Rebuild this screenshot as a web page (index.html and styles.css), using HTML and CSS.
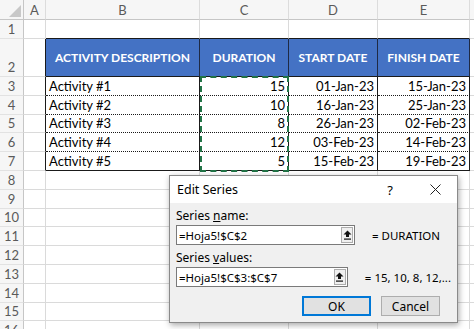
FILE: index.html
```html
<!DOCTYPE html>
<html lang="en">
<head>
  <meta charset="UTF-8">
  <meta name="viewport" content="width=device-width, initial-scale=1.0">
  <title>Edit Series</title>
  <link rel="stylesheet" href="styles.css">
</head>
<body>
  <div class="sheet">
    <!-- column headers -->
    <div class="corner"><svg width="12" height="12" viewBox="0 0 12 12"><path d="M12 0 V12 H0 Z" fill="#c8c8c8"/></svg></div>
    <div class="col-head">A</div>
    <div class="col-head">B</div>
    <div class="col-head">C</div>
    <div class="col-head">D</div>
    <div class="col-head">E</div>
    <div class="col-head"></div>

    <!-- row 1 -->
    <div class="row-head">1</div>
    <div class="cell"></div>
    <div class="cell top-edge"></div>
    <div class="cell top-edge"></div>
    <div class="cell top-edge"></div>
    <div class="cell top-edge"></div>
    <div class="cell"></div>

    <!-- row 2 -->
    <div class="row-head">2</div>
    <div class="cell left-edge"></div>
    <div class="cell th">ACTIVITY DESCRIPTION</div>
    <div class="cell th">DURATION</div>
    <div class="cell th">START DATE</div>
    <div class="cell th">FINISH DATE</div>
    <div class="cell"></div>

    <!-- rows 3-7 -->
    <div class="row-head">3</div>
    <div class="cell left-edge"></div>
    <div class="cell td">Activity #1</div>
    <div class="cell td num">15</div>
    <div class="cell td num">01-Jan-23</div>
    <div class="cell td num">15-Jan-23</div>
    <div class="cell"></div>

    <div class="row-head">4</div>
    <div class="cell left-edge"></div>
    <div class="cell td">Activity #2</div>
    <div class="cell td num">10</div>
    <div class="cell td num">16-Jan-23</div>
    <div class="cell td num">25-Jan-23</div>
    <div class="cell"></div>

    <div class="row-head">5</div>
    <div class="cell left-edge"></div>
    <div class="cell td">Activity #3</div>
    <div class="cell td num">8</div>
    <div class="cell td num">26-Jan-23</div>
    <div class="cell td num">02-Feb-23</div>
    <div class="cell"></div>

    <div class="row-head">6</div>
    <div class="cell left-edge"></div>
    <div class="cell td">Activity #4</div>
    <div class="cell td num">12</div>
    <div class="cell td num">03-Feb-23</div>
    <div class="cell td num">14-Feb-23</div>
    <div class="cell"></div>

    <div class="row-head">7</div>
    <div class="cell left-edge"></div>
    <div class="cell td last">Activity #5</div>
    <div class="cell td last num">5</div>
    <div class="cell td last num">15-Feb-23</div>
    <div class="cell td last num">19-Feb-23</div>
    <div class="cell"></div>

    <!-- empty rows -->
    <div class="row-head">8</div>
    <div class="cell"></div><div class="cell"></div><div class="cell"></div><div class="cell"></div><div class="cell"></div><div class="cell"></div>
    <div class="row-head">9</div>
    <div class="cell"></div><div class="cell"></div><div class="cell"></div><div class="cell"></div><div class="cell"></div><div class="cell"></div>
    <div class="row-head">10</div>
    <div class="cell"></div><div class="cell"></div><div class="cell"></div><div class="cell"></div><div class="cell"></div><div class="cell"></div>
    <div class="row-head">11</div>
    <div class="cell"></div><div class="cell"></div><div class="cell"></div><div class="cell"></div><div class="cell"></div><div class="cell"></div>
    <div class="row-head">12</div>
    <div class="cell"></div><div class="cell"></div><div class="cell"></div><div class="cell"></div><div class="cell"></div><div class="cell"></div>
    <div class="row-head">13</div>
    <div class="cell"></div><div class="cell"></div><div class="cell"></div><div class="cell"></div><div class="cell"></div><div class="cell"></div>
    <div class="row-head">14</div>
    <div class="cell"></div><div class="cell"></div><div class="cell"></div><div class="cell"></div><div class="cell"></div><div class="cell"></div>
    <div class="row-head">15</div>
    <div class="cell"></div><div class="cell"></div><div class="cell"></div><div class="cell"></div><div class="cell"></div><div class="cell"></div>
    <div class="row-head">16</div>
    <div class="cell"></div><div class="cell"></div><div class="cell"></div><div class="cell"></div><div class="cell"></div><div class="cell"></div>

    <!-- copied range C3:C7 -->
    <div class="copy-range"></div>
  </div>

  <div class="dialog">
    <div class="dialog-title">
      <span class="dialog-name">Edit Series</span>
      <span class="title-btn">?</span>
      <span class="title-btn">
        <svg width="11" height="11" viewBox="0 0 11 11"><path d="M0.5 0.5 L10.5 10.5 M10.5 0.5 L0.5 10.5" stroke="#222" stroke-width="1"/></svg>
      </span>
    </div>
    <div class="dialog-body">
      <div class="field-label">Series <u>n</u>ame:</div>
      <div class="field-row">
        <div class="ref-input">
          <span class="ref-text">=Hoja5!$C$2</span>
          <span class="ref-btn"><svg width="9" height="10" viewBox="0 0 9 10"><path d="M4.5 0.5 L8.5 4.5 H6 V7 H3 V4.5 H0.5 Z" fill="#111"/><rect x="1" y="8.5" width="7" height="1.2" fill="#111"/></svg></span>
        </div>
        <span class="field-result">= DURATION</span>
      </div>
      <div class="field-label">Series <u>v</u>alues:</div>
      <div class="field-row">
        <div class="ref-input">
          <span class="ref-text">=Hoja5!$C$3:$C$7</span>
          <span class="ref-btn"><svg width="9" height="10" viewBox="0 0 9 10"><path d="M4.5 0.5 L8.5 4.5 H6 V7 H3 V4.5 H0.5 Z" fill="#111"/><rect x="1" y="8.5" width="7" height="1.2" fill="#111"/></svg></span>
        </div>
        <span class="field-result">= 15, 10, 8, 12,...</span>
      </div>
      <div class="dialog-actions">
        <button class="btn btn-ok">OK</button>
        <button class="btn btn-cancel">Cancel</button>
      </div>
    </div>
  </div>
</body>
</html>
```

FILE: styles.css
```css
:root {
  --grid-line: #dadada;
  --head-bg: #f6f6f6;
  --head-text: #5a5a5a;
  --table-blue: #4472c4;
  --copy-green: #217346;
  --cell-font: 'Lato', 'Liberation Sans', sans-serif;
  --ui-font: 'Noto Sans', 'Open Sans', sans-serif;
}

*, *::before, *::after {
  box-sizing: border-box;
}

body {
  margin: 0;
  background: #fff;
  overflow: hidden;
}

/* Hoja de cálculo */
.sheet {
  position: relative;
  display: grid;
  grid-template-columns: 24px 22px 154px 89px 89px 92px 1fr;
  grid-template-rows: 20px 19px 38px repeat(14, 18.8px);
  width: 474px;
  font-family: var(--cell-font);
  font-size: 13px;
  color: #000;
}

.corner {
  display: flex;
  align-items: flex-end;
  justify-content: flex-end;
  padding: 0 2px 2px 0;
  background: var(--head-bg);
  border-right: 1px solid #c6c6c6;
  border-bottom: 1px solid #c6c6c6;
}

.col-head {
  display: flex;
  align-items: center;
  justify-content: center;
  background: var(--head-bg);
  color: var(--head-text);
  border-right: 1px solid #dcdcdc;
  border-bottom: 1px solid #c6c6c6;
}

.row-head {
  display: flex;
  align-items: flex-end;
  justify-content: center;
  padding-bottom: 1px;
  background: var(--head-bg);
  color: var(--head-text);
  border-right: 1px solid #c6c6c6;
  border-bottom: 1px solid #e2e2e2;
}

.cell {
  display: flex;
  align-items: flex-end;
  padding: 0 3px 1px;
  white-space: nowrap;
  overflow: hidden;
  border-right: 1px solid var(--grid-line);
  border-bottom: 1px solid var(--grid-line);
}

.top-edge {
  border-bottom-color: #1a1a1a;
}

.left-edge {
  border-right-color: #1a1a1a;
}

.th {
  align-items: center;
  justify-content: center;
  padding: 0;
  background: var(--table-blue);
  color: #fff;
  font-weight: 700;
  font-size: 12px;
  border-right: 1px solid #1f2a44;
  border-bottom: 1px solid #1a1a1a;
}

.td {
  border-right: 1px solid #1a1a1a;
  border-bottom: 1px dotted #1a1a1a;
}

.td.last {
  border-bottom: 1px solid #1a1a1a;
}

.num {
  justify-content: flex-end;
}

/* rango copiado: capa sobre C3:C7 */
.copy-range {
  position: absolute;
  grid-column: 4 / 5;
  grid-row: 4 / 9;
  inset: -1px 0 -1px 0;
  border: 2px dashed var(--copy-green);
  z-index: 1;
}

/* Cuadro de diálogo */
.dialog {
  position: absolute;
  left: 169px;
  top: 175px;
  width: 289px;
  height: 148px;
  display: flex;
  flex-direction: column;
  border: 1px solid #8a8a8a;
  background: #f0f0f0;
  box-shadow: 1px 2px 6px rgba(0, 0, 0, 0.35);
  font-family: var(--ui-font);
  font-size: 12px;
  color: #000;
  z-index: 2;
}

.dialog-title {
  display: flex;
  align-items: center;
  height: 30px;
  padding: 0 7px;
  background: #fff;
}

.dialog-name {
  flex: 1;
  font-size: 12.5px;
}

.title-btn {
  display: flex;
  align-items: center;
  justify-content: center;
  width: 30px;
  margin-left: 15px;
  font-size: 13px;
}

.dialog-body {
  flex: 1;
  padding: 4px 6px 6px;
}

.field-label {
  line-height: 17px;
  margin-bottom: 1px;
}

.field-row {
  display: flex;
  align-items: center;
  gap: 17px;
  margin-bottom: 4px;
}

.ref-input {
  display: flex;
  align-items: center;
  width: 179px;
  height: 20px;
  padding: 0 1px 0 2px;
  background: #fff;
  border: 1px solid #7a7a7a;
}

.ref-text {
  flex: 1;
  font-size: 11.5px;
}

.ref-btn {
  display: flex;
  align-items: center;
  justify-content: center;
  width: 12px;
  height: 16px;
  background: #f0f0f0;
  border: 1px solid #adadad;
}

.field-result {
  white-space: nowrap;
  font-size: 11.5px;
}

.dialog-actions {
  display: flex;
  gap: 10px;
  margin: 9px 0 0 126px;
}

.btn {
  height: 20px;
  padding: 0;
  font-family: var(--ui-font);
  font-size: 12px;
  color: #000;
  background: #e1e1e1;
  border: 1px solid #adadad;
}

.btn-ok {
  width: 69px;
  border: 2px solid #0078d7;
}

.btn-cancel {
  width: 59px;
}
```
